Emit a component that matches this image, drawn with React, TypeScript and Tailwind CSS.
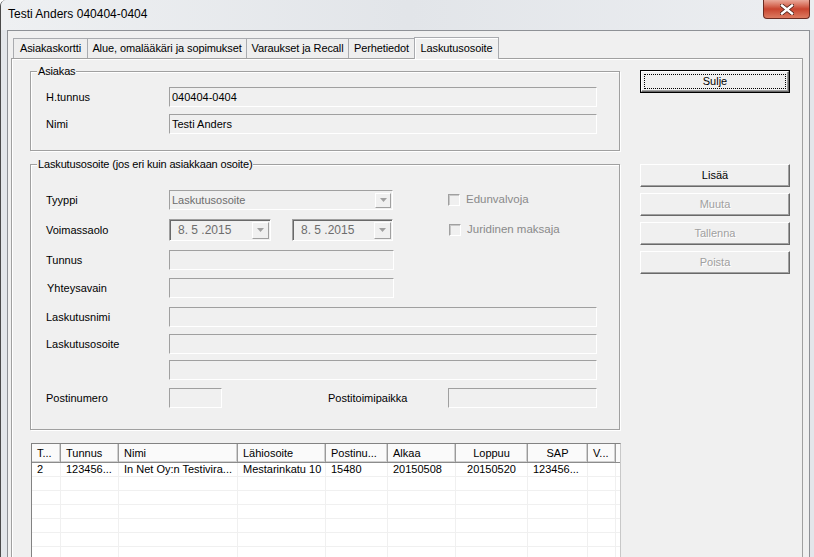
import React from 'react';

type Kids = { children?: React.ReactNode; className?: string };

// luettu (read-only) tekstikenttä
const Field = ({ children, className = '' }: Kids) => (
  <div
    className={`h-[20px] flex items-center px-[2px] border border-t-[#a0a0a0] border-l-[#a0a0a0] border-b-white border-r-white bg-[#f0f0f0] ${className}`}
  >
    {children}
  </div>
);

const Arrow = ({ className = '' }: { className?: string }) => (
  <div
    className={`flex items-center justify-center border border-t-white border-l-white border-b-[#a0a0a0] border-r-[#a0a0a0] bg-[#f0f0f0] ${className}`}
  >
    <svg width="7" height="4" viewBox="0 0 7 4">
      <path d="M0 0h7L3.5 4z" fill="#a0a0a0" />
    </svg>
  </div>
);

const DateBox = ({ className = '' }: { className?: string }) => (
  <div
    className={`h-[22px] flex items-center border border-t-[#a0a0a0] border-l-[#a0a0a0] border-b-white border-r-white shadow-[inset_1px_1px_0_#696969] ${className}`}
  >
    <span className="flex-1 pl-[8px] text-[#6d6d6d] text-[12px]">8. 5 .2015</span>
    <Arrow className="w-[17px] h-[17px] mr-[1px]" />
  </div>
);

const Group = ({ title, children, className = '' }: Kids & { title: string }) => (
  <div
    className={`relative border border-[#a0a0a0] shadow-[inset_1px_1px_0_#fff,1px_1px_0_#fff] ${className}`}
  >
    <span className="absolute -top-[7px] left-[6px] px-[1px] bg-[#f0f0f0] leading-[12px] tracking-[-0.15px]">{title}</span>
    {children}
  </div>
);

const Check = ({ label }: { label: string }) => (
  <div className="flex items-center">
    <span className="w-[12px] h-[12px] border border-t-[#a0a0a0] border-l-[#a0a0a0] border-b-white border-r-white shadow-[inset_1px_1px_0_#c8c8c8]" />
    <span className="ml-[6px] text-[#8a8a8a] text-[11.5px]">{label}</span>
  </div>
);

const Btn = ({ children, disabled = false }: Kids & { disabled?: boolean }) => (
  <div
    className={`w-[150px] h-[23px] flex items-center justify-center border border-t-white border-l-white border-b-[#696969] border-r-[#696969] shadow-[inset_-1px_-1px_0_#a0a0a0] ${
      disabled ? 'text-[#a0a0a0] [text-shadow:1px_1px_0_#fff]' : 'text-black'
    }`}
  >
    {children}
  </div>
);

const tabs = ['Asiakaskortti', 'Alue, omalääkäri ja sopimukset', 'Varaukset ja Recall', 'Perhetiedot'];
const tabWidths = ['w-[75px]', 'w-[160px]', 'w-[103px]', 'w-[67px]'];

const cols = [
  { title: 'T...', w: 'w-[29px]', v: '2' },
  { title: 'Tunnus', w: 'w-[58px]', v: '123456...' },
  { title: 'Nimi', w: 'w-[119px]', v: 'In Net Oy:n Testivira...' },
  { title: 'Lähiosoite', w: 'w-[88px]', v: 'Mestarinkatu 10' },
  { title: 'Postinu...', w: 'w-[62px]', v: '15480' },
  { title: 'Alkaa', w: 'w-[68px]', v: '20150508' },
  { title: 'Loppuu', w: 'w-[72px]', v: '20150520', center: true },
  { title: 'SAP', w: 'w-[60px]', v: '123456...', centerHead: true },
  { title: 'V...', w: 'w-[28px]', v: '' },
];

export default function App() {
  return (
    <div className="w-[814px] h-[557px] overflow-hidden flex flex-col bg-[#e3e6ea] border-l border-[#4a4a4a] rounded-tl-[6px] font-['Liberation_Sans',Arial,sans-serif] text-[11px] text-black">
      {/* otsikkopalkki */}
      <div className="relative h-[30px] shrink-0 flex bg-gradient-to-r from-[#eef0f2] via-[#e2e5e9] to-[#eceef1]">
        <span className="ml-[7px] mt-[7px] text-[12px] leading-[15px]">Testi Anders 040404-0404</span>
        <div className="absolute top-0 right-[4px] w-[47px] h-[19px] rounded-b-[4px] border border-t-0 border-[#6b2c22] bg-gradient-to-b from-[#e9a99a] via-[#c8442f] to-[#dc7a60] flex items-center justify-center">
          <svg width="14" height="11" viewBox="0 0 14 11">
            <path d="M2 1.5l10 8M12 1.5l-10 8" stroke="#4a1d15" strokeWidth="4" strokeLinecap="square" />
            <path d="M2 1.5l10 8M12 1.5l-10 8" stroke="#fff" strokeWidth="2.4" strokeLinecap="square" />
          </svg>
        </div>
      </div>

      <div className="flex-1 flex pl-[6px] pr-[4px]">
        <div className="flex-1 flex flex-col bg-[#f0f0f0] border-l border-t border-r border-[#8e9196] pl-[3px] pr-[6px] pt-[5px]">
          {/* välilehdet */}
          <div className="h-[22px] shrink-0 flex items-end pl-[2px]">
            {tabs.map((t, i) => (
              <div
                key={t}
                className={`${tabWidths[i]} h-[20px] -mr-px flex items-center justify-center border border-b-0 border-[#a9abaf] bg-[#eeeeee] tracking-[-0.1px]`}
              >
                {t}
              </div>
            ))}
            <div className="w-[85px] h-[22px] -mb-px relative z-10 flex items-center justify-center border border-b-0 border-[#a9abaf] bg-[#f0f0f0] shadow-[inset_1px_1px_0_#fff] tracking-[-0.1px]">
              Laskutusosoite
            </div>
          </div>

          {/* välilehden sisältö */}
          <div className="flex-1 flex border border-[#a0a0a0] shadow-[inset_1px_1px_0_#fff] pl-[18px]">
            <div className="w-[591px] flex flex-col pt-[12px]">
              <Group title="Asiakas" className="h-[80px] w-[590px] pt-[15px] pl-[15px]">
                <div className="flex items-center">
                  <span className="w-[123px]">H.tunnus</span>
                  <Field className="w-[428px]">040404-0404</Field>
                </div>
                <div className="flex items-center mt-[7px]">
                  <span className="w-[123px]">Nimi</span>
                  <Field className="w-[428px]">Testi Anders</Field>
                </div>
              </Group>

              <Group
                title="Laskutusosoite (jos eri kuin asiakkaan osoite)"
                className="mt-[13px] h-[266px] w-[590px] pt-[25px] pl-[15px]"
              >
                <div className="flex items-center">
                  <span className="w-[123px]">Tyyppi</span>
                  <div className="w-[224px] h-[20px] flex items-center border border-t-[#a0a0a0] border-l-[#a0a0a0] border-b-white border-r-white">
                    <span className="flex-1 pl-[2px] text-[#6d6d6d]">Laskutusosoite</span>
                    <Arrow className="w-[16px] h-[15px] mr-[1px]" />
                  </div>
                  <div className="ml-[55px]">
                    <Check label="Edunvalvoja" />
                  </div>
                </div>
                <div className="flex items-center mt-[9px]">
                  <span className="w-[123px]">Voimassaolo</span>
                  <DateBox className="w-[102px]" />
                  <DateBox className="w-[101px] ml-[21px]" />
                  <div className="ml-[56px]">
                    <Check label="Juridinen maksaja" />
                  </div>
                </div>
                <div className="flex items-center mt-[9px]">
                  <span className="w-[123px]">Tunnus</span>
                  <Field className="w-[225px]" />
                </div>
                <div className="flex items-center mt-[8px]">
                  <span className="w-[123px] pl-[1px]">Yhteysavain</span>
                  <Field className="w-[225px]" />
                </div>
                <div className="flex items-center mt-[9px]">
                  <span className="w-[123px]">Laskutusnimi</span>
                  <Field className="w-[428px]" />
                </div>
                <div className="flex items-center mt-[7px]">
                  <span className="w-[123px]">Laskutusosoite</span>
                  <Field className="w-[428px]" />
                </div>
                <div className="flex items-center mt-[6px]">
                  <span className="w-[123px]" />
                  <Field className="w-[428px]" />
                </div>
                <div className="flex items-center mt-[8px]">
                  <span className="w-[123px]">Postinumero</span>
                  <Field className="w-[53px]" />
                  <span className="ml-[106px] w-[120px]">Postitoimipaikka</span>
                  <Field className="w-[149px]" />
                </div>
              </Group>

              {/* lista */}
              <div className="mt-[13px] ml-[1px] flex-1 bg-white border border-t-[#828282] border-l-[#828282] border-r-[#c8c8c8] border-b-0 overflow-hidden">
                <div className="flex h-[19px] border-b border-[#8c8c8c] bg-[#fafafa]">
                  {cols.map((c) => (
                    <div
                      key={c.title}
                      className={`${c.w} shrink-0 flex items-center px-[5px] border-r border-[#9a9a9a] shadow-[inset_-1px_-1px_0_#d0d0d0] ${
                        c.center || c.centerHead ? 'justify-center' : ''
                      }`}
                    >
                      {c.title}
                    </div>
                  ))}
                  <div className="flex-1" />
                </div>
                {Array.from({ length: 7 }).map((_, r) => (
                  <div key={r} className="flex h-[14px] border-b border-[#f0f0f0]">
                    {cols.map((c) => (
                      <div
                        key={c.title}
                        className={`${c.w} shrink-0 flex items-center px-[5px] border-r border-[#f0f0f0] whitespace-nowrap overflow-hidden ${
                          c.center ? 'justify-center' : ''
                        }`}
                      >
                        {r === 0 ? c.v : ''}
                      </div>
                    ))}
                    <div className="flex-1" />
                  </div>
                ))}
              </div>
            </div>

            {/* painikkeet */}
            <div className="ml-[19px] pt-[11px] flex flex-col">
              <div className="relative w-[150px] h-[23px] border border-black">
                <div className="w-full h-full flex items-center justify-center border border-t-white border-l-white border-b-[#696969] border-r-[#696969] shadow-[inset_-1px_-1px_0_#a0a0a0]">
                  Sulje
                </div>
                <span className="absolute inset-[3px] border border-dotted border-black" />
              </div>
              <div className="mt-[71px] flex flex-col gap-[6px]">
                <Btn>Lisää</Btn>
                <Btn disabled>Muuta</Btn>
                <Btn disabled>Tallenna</Btn>
                <Btn disabled>Poista</Btn>
              </div>
            </div>
          </div>
        </div>
      </div>
    </div>
  );
}
